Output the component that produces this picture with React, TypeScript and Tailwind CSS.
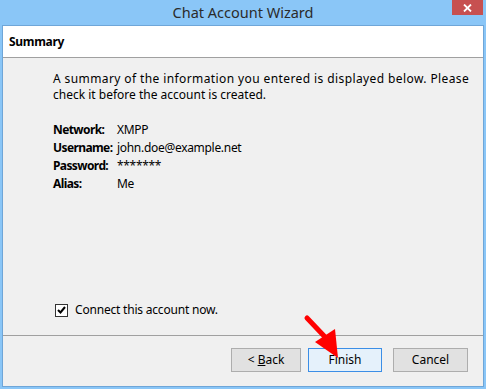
import React from 'react';

const rows: [string, string][] = [
  ['Network:', 'XMPP'],
  ['Username:', 'john.doe@example.net'],
  ['Password:', '*******'],
  ['Alias:', 'Me'],
];

export default function App() {
  return (
    <div
      className="relative flex h-[389px] w-[486px] flex-col bg-[#8ac6f7] px-[2px] pb-[2px] text-[12px] text-black"
      style={{ fontFamily: '"Noto Sans", "Open Sans", sans-serif' }}
    >
      {/* title bar */}
      <div className="relative flex h-[25px] shrink-0 items-center justify-center">
        <span className="text-[14.5px] leading-none text-[#2b2b2b]">Chat Account Wizard</span>
        <button
          type="button"
          className="absolute right-[1px] top-0 flex h-[15px] w-[31px] items-center justify-center bg-[#c75050]"
          aria-label="close"
        >
          <svg width="9" height="8" viewBox="0 0 9 8">
            <path d="M1 0.5 L8 7.5 M8 0.5 L1 7.5" stroke="white" strokeWidth="1.8" />
          </svg>
        </button>
      </div>

      {/* window body */}
      <div className="flex flex-1 flex-col border border-[#6fa6d8] bg-[#f0f0f0]">
        <div className="flex h-[32px] shrink-0 items-center border-b border-[#a0a0a0] bg-white pl-[6px]">
          <span className="font-bold tracking-[-0.3px]">Summary</span>
        </div>

        <div className="flex flex-1 flex-col pb-[17px] pl-[50px] pt-[13px]">
          <p className="leading-[16px]">
            <span className="tracking-[0.4px]">
              A summary of the information you entered is displayed below. Please
            </span>
            <br />
            check it before the account is created.
          </p>

          <div className="mt-[18px] flex flex-col">
            {rows.map(([label, value]) => (
              <div key={label} className="flex h-[18px] items-center">
                <span className="w-[64px] font-bold tracking-[-0.6px]">{label}</span>
                <span className="tracking-[-0.3px]">{value}</span>
              </div>
            ))}
          </div>

          <label className="mt-auto flex h-[16px] items-center gap-[7px] pl-[2px]">
            <span className="flex h-[13px] w-[13px] items-center justify-center border border-[#333] bg-white">
              <svg width="9" height="8" viewBox="0 0 9 8">
                <path d="M1 4 L3.5 6.5 L8 1" fill="none" stroke="black" strokeWidth="2" />
              </svg>
            </span>
            <span className="tracking-[-0.2px]">Connect this account now.</span>
          </label>
        </div>

        {/* footer */}
        <div className="flex h-[51px] shrink-0 items-start justify-end border-t border-[#a0a0a0] pr-[15px] pt-[12px]">
          <button type="button" className="h-[24px] w-[70px] border border-[#adadad] bg-[#e1e1e1]">
            &lt; <span className="underline">B</span>ack
          </button>
          <button type="button" className="ml-[7px] h-[24px] w-[74px] border border-[#3c8ee6] bg-[#e5f1fb]">
            Finish
          </button>
          <button type="button" className="ml-[11px] h-[24px] w-[75px] border border-[#adadad] bg-[#e1e1e1]">
            Cancel
          </button>
        </div>
      </div>

      {/* annotation arrow */}
      <svg className="pointer-events-none absolute left-0 top-0" width="486" height="389">
        <line x1="307" y1="318" x2="326" y2="338" stroke="#f00" strokeWidth="5" strokeLinecap="round" />
        <polygon points="315,342 335,329 338,358" fill="#f00" />
      </svg>
    </div>
  );
}
